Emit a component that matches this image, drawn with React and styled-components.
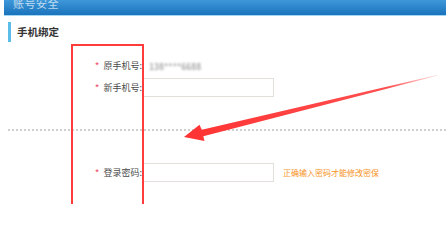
import React from 'react';
import styled, { createGlobalStyle } from 'styled-components';

const GlobalStyle = createGlobalStyle`
  html, body {
    margin: 0;
    padding: 0;
    background: #fff;
  }
  body {
    font-family: "Noto Sans CJK SC", "Noto Sans", sans-serif;
    color: #444;
  }
`;

const Page = styled.div`
  position: relative;
  width: 446px;
  height: 222px;
  overflow: hidden;
`;

const Header = styled.div`
  margin-left: 4px;
  height: 15px;
  padding-left: 9px;
  background: linear-gradient(#3e98d9, #1b73bc);
  border-bottom: 1px solid #a3d6f2;
  overflow: hidden;

  span {
    display: block;
    margin-top: -3px;
    font-size: 11px;
    line-height: 13px;
    color: rgba(255, 255, 255, 0.7);
    letter-spacing: 0.5px;
  }
`;

const SectionTitle = styled.h3`
  margin: 6px 0 0 8px;
  height: 20px;
  padding-left: 6px;
  border-left: 3px solid #5cbdea;
  font-size: 10.5px;
  line-height: 20px;
  font-weight: bold;
  color: #333;
`;

const Form = styled.div`
  padding-top: 14px;
`;

const Row = styled.div`
  display: grid;
  grid-template-columns: 143px auto auto;
  justify-content: start;
  align-items: center;
  height: 19px;
  margin-top: ${(p) => p.$gap || 0}px;
`;

const Label = styled.label`
  justify-self: end;
  padding-right: 1px;
  font-size: 9px;
  color: #4a4a4a;
  white-space: nowrap;
`;

const Star = styled.i`
  font-style: normal;
  color: #f2506e;
  font-size: 10px;
  margin-right: 4px;
  vertical-align: -1px;
`;

const Value = styled.span`
  margin-left: 4px;
  padding: 0 2px;
  font-size: 8.5px;
  font-weight: bold;
  color: #a8a8a8;
  filter: blur(1px);
`;

const Input = styled.div`
  box-sizing: border-box;
  width: 131px;
  height: 19px;
  border: 1px solid #e2dfda;
  background: #fff;
`;

const Hint = styled.span`
  margin-left: 9px;
  font-size: 8px;
  color: #f7931e;
  white-space: nowrap;
`;

const Divider = styled.div`
  margin: 32px 0 0 8px;
  border-top: 2px dotted #cfcfcf;
`;

const Frame = styled.div`
  position: absolute;
  left: 71px;
  top: 44px;
  width: 73px;
  height: 160px;
  box-sizing: border-box;
  border: 2px solid #ff3b3b;
  border-bottom: none;
  pointer-events: none;
`;

const Arrow = styled.svg`
  position: absolute;
  left: 0;
  top: 0;
  pointer-events: none;
`;

export default function App() {
  return (
    <>
      <GlobalStyle />
      <Page>
        <Header><span>账号安全</span></Header>
        <SectionTitle>手机绑定</SectionTitle>
        <Form>
          <Row>
            <Label><Star>*</Star>原手机号:</Label>
            <Value>138****6688</Value>
          </Row>
          <Row $gap={3}>
            <Label><Star>*</Star>新手机号:</Label>
            <Input />
          </Row>
          <Divider />
          <Row $gap={32}>
            <Label><Star>*</Star>登录密码:</Label>
            <Input />
            <Hint>正确输入密码才能修改密保</Hint>
          </Row>
        </Form>
        <Frame />
        <Arrow width="446" height="222" viewBox="0 0 446 222">
          <defs>
            <linearGradient id="arrowFade" x1="437" y1="75" x2="185" y2="137" gradientUnits="userSpaceOnUse">
              <stop offset="0" stopColor="#ff4040" stopOpacity="0.15" />
              <stop offset="0.2" stopColor="#ff3b3b" stopOpacity="0.9" />
              <stop offset="1" stopColor="#ff3333" />
            </linearGradient>
          </defs>
          <polygon
            points="437,75 201.8,129.8 199.5,124.8 184,137 204.5,141 203.3,136.2 437,75.8"
            fill="url(#arrowFade)"
          />
        </Arrow>
      </Page>
    </>
  );
}
